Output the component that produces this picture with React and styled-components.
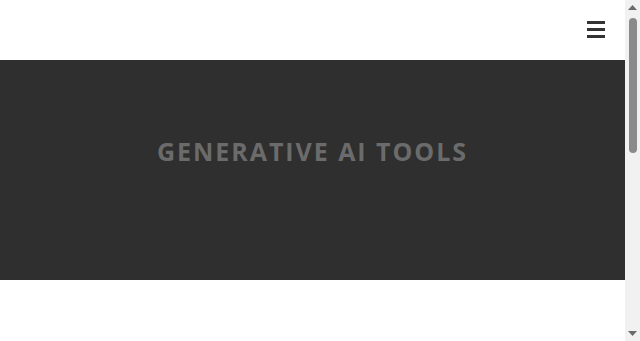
import React from 'react'
import styled, { createGlobalStyle } from 'styled-components'

const GlobalStyle = createGlobalStyle`
  html, body {
    margin: 0;
    padding: 0;
    font-family: "Open Sans", "Liberation Sans", sans-serif;
    background: #fff;
  }
`

const Page = styled.div`
  margin-right: 15px;
`

const Header = styled.header`
  height: 60px;
  display: flex;
  align-items: center;
  justify-content: flex-end;
  padding-right: 20px;
  box-sizing: border-box;
`

const MenuButton = styled.button`
  width: 18px;
  height: 17px;
  padding: 0;
  border: 0;
  background: transparent;
  display: flex;
  flex-direction: column;
  justify-content: space-between;
  cursor: pointer;
  margin-top: -2px;
`

const Bar = styled.span`
  display: block;
  height: 3px;
  background: #333;
`

const Hero = styled.section`
  height: 220px;
  background: #2f2f2f;
  display: flex;
  justify-content: center;
  padding-top: 76px;
  box-sizing: border-box;
`

const Title = styled.h1`
  margin: 0;
  font-size: 25px;
  line-height: 1.2;
  font-weight: 700;
  letter-spacing: 1.95px;
  color: #6b6b6b;
  text-transform: uppercase;
`

const Content = styled.main`
  height: 505px;
`

/* fake browser scrollbar drawn over the right edge */
const ScrollTrack = styled.div`
  position: fixed;
  top: 0;
  right: 0;
  width: 15px;
  height: 100vh;
  background: #f1f1f1;
  display: flex;
  flex-direction: column;
  align-items: center;
`

const Arrow = styled.div`
  height: 15px;
  width: 15px;
  display: flex;
  align-items: center;
  justify-content: center;
  flex: none;
`

const Thumb = styled.div`
  margin-top: 3px;
  width: 8px;
  height: 135px;
  border-radius: 4px;
  background: #8a8a8a;
`

const Spacer = styled.div`
  flex: 1;
`

export default function App() {
  return (
    <>
      <GlobalStyle />
      <Page>
        <Header>
          <MenuButton aria-label="Menu">
            <Bar />
            <Bar />
            <Bar />
          </MenuButton>
        </Header>
        <Hero>
          <Title>Generative AI Tools</Title>
        </Hero>
        <Content />
      </Page>
      <ScrollTrack>
        <Arrow>
          <svg width="9" height="5" viewBox="0 0 9 5">
            <path d="M0 5h9L4.5 0z" fill="#6a6a6a" />
          </svg>
        </Arrow>
        <Thumb />
        <Spacer />
        <Arrow>
          <svg width="9" height="5" viewBox="0 0 9 5">
            <path d="M0 0h9L4.5 5z" fill="#6a6a6a" />
          </svg>
        </Arrow>
      </ScrollTrack>
    </>
  )
}
